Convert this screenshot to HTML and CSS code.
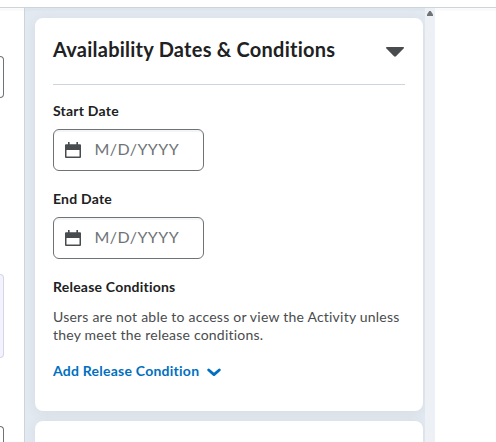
FILE: index.html
```
<!DOCTYPE html>
<html lang="en">
<head>
	<meta charset="utf-8">
	<title>Edit Activity</title>
	<link rel="stylesheet" href="styles.css">
</head>
<body>
<header class="topbar"></header>
<div class="layout">
	<main class="primary">
		<div class="field"></div>
		<div class="editor"></div>
		<div class="field field-cut"></div>
	</main>
	<aside class="secondary">
		<div class="cards">
			<section class="card">
				<div class="card-header">
					<h2>Availability Dates &amp; Conditions</h2>
					<svg class="collapse" width="18" height="10" viewBox="0 0 18 10"><path d="M0.6 0h16.8q1 .6.2 1.5L10 9.3q-1 .9-2 0L.4 1.5Q-.4.6.6 0z" fill="#494c4e"/></svg>
				</div>
				<h3>Start Date</h3>
				<div class="date-input">
					<svg width="16" height="16" viewBox="0 0 16 16"><path fill="#494c4e" fill-rule="evenodd" d="M3 0h1.6v2.2h6.8V0H13v2.2h2a1 1 0 0 1 1 1V15a1 1 0 0 1-1 1H1a1 1 0 0 1-1-1V3.2a1 1 0 0 1 1-1h2zM1.5 8v6.5h13V8z"/></svg>
					<span>M/D/YYYY</span>
				</div>
				<h3>End Date</h3>
				<div class="date-input">
					<svg width="16" height="16" viewBox="0 0 16 16"><path fill="#494c4e" fill-rule="evenodd" d="M3 0h1.6v2.2h6.8V0H13v2.2h2a1 1 0 0 1 1 1V15a1 1 0 0 1-1 1H1a1 1 0 0 1-1-1V3.2a1 1 0 0 1 1-1h2zM1.5 8v6.5h13V8z"/></svg>
					<span>M/D/YYYY</span>
				</div>
				<h3>Release Conditions</h3>
				<p>Users are not able to access or view the Activity unless they meet the release conditions.</p>
				<a class="add" href="#">
					<span>Add Release Condition</span>
					<svg width="14" height="9" viewBox="0 0 14 9"><path d="M1.7 2L7 6.6 12.3 2" fill="none" stroke="#006fbf" stroke-width="2.8" stroke-linecap="round" stroke-linejoin="round"/></svg>
				</a>
			</section>
			<section class="card card-next"></section>
		</div>
		<div class="scrollbar">
			<svg width="6" height="5" viewBox="0 0 6 5"><path d="M2.3 0h1.4L6 3.5V5H0V3.5z" fill="#6e7376"/></svg>
		</div>
	</aside>
</div>
</body>
</html>
```
FILE: styles.css
```
* { box-sizing: border-box; }

body {
	margin: 0;
	height: 442px;
	overflow: hidden;
	display: flex;
	flex-direction: column;
	background: #fff;
	color: #202122;
	font-family: Lato, sans-serif;
	font-size: 14px;
}

.topbar {
	flex: none;
	height: 8px;
	border-bottom: 1px solid #cdd5dc;
}

.layout {
	flex: 1;
	min-height: 0;
	display: flex;
	box-shadow: inset 0 3px #fafafb;
}

/* left column, only the right ends of its controls are visible */
.primary {
	flex: none;
	width: 25px;
	padding-top: 48px;
	border-right: 1px solid #cdd5dc;
}

.field {
	width: 4px;
	height: 42px;
	border: 1px solid #6e7376;
	border-left: 0;
	border-radius: 0 6px 6px 0;
}

.field-cut {
	height: 16px;
	border-bottom: 0;
	border-radius: 0 6px 0 0;
}

.editor {
	width: 4px;
	height: 84px;
	margin: 176px 0 68px;
	background: #f3f3ff;
	border: 1px solid #d6d5e6;
	border-left: 0;
	border-radius: 0 6px 6px 0;
}

.secondary {
	flex: none;
	display: flex;
	width: 410px;
	overflow: hidden;
	background: #e3e9f1;
}

.cards {
	width: 400px;
	padding: 10px 2px 0 10px;
	box-shadow: inset 0 3px #dfe5ec;
}

.card {
	height: 393px;
	margin-bottom: 10px;
	padding: 0 18px;
	background: #fff;
	border-radius: 8px;
	box-shadow: 0 2px 12px rgba(73, 76, 78, 0.08);
}

.card-next {
	height: 21px;
	margin-bottom: 0;
	border-radius: 8px 8px 0 0;
}

.card-header {
	display: flex;
	justify-content: space-between;
	align-items: center;
	height: 67px;
	margin-bottom: 16px;
	border-bottom: 1px solid #cdd5dc;
}

h2 {
	margin: 0;
	font-size: 20px;
	line-height: 24px;
	letter-spacing: 0.24px;
	padding-bottom: 4px;
}

.collapse { margin: 1px 1px 0 0; }

h3 {
	margin: 0 0 9px;
	font-size: 14px;
	line-height: 19px;
	letter-spacing: 0.22px;
}

.date-input {
	display: flex;
	align-items: center;
	gap: 13.5px;
	width: 151px;
	height: 42px;
	margin-bottom: 18px;
	padding: 0 11px;
	border: 1px solid #6e7376;
	border-radius: 6px;
	box-shadow: inset 0 2px #f3f5f7;
	color: #6e7376;
	font-size: 16px;
	letter-spacing: 0.4px;
}

.date-input span { padding-bottom: 3px; }

p {
	margin: 12px 0 18px;
	color: #494c4e;
	line-height: 18px;
	letter-spacing: 0.22px;
}

.add {
	display: flex;
	align-items: center;
	gap: 8px;
	color: #006fbf;
	font-weight: bold;
	line-height: 18px;
	letter-spacing: 0.24px;
	text-decoration: none;
}

.add svg { margin-top: 3px; }

.scrollbar {
	width: 10px;
	padding: 3px 2px;
	background: #edf1f5;
}

.scrollbar svg { display: block; }
```
